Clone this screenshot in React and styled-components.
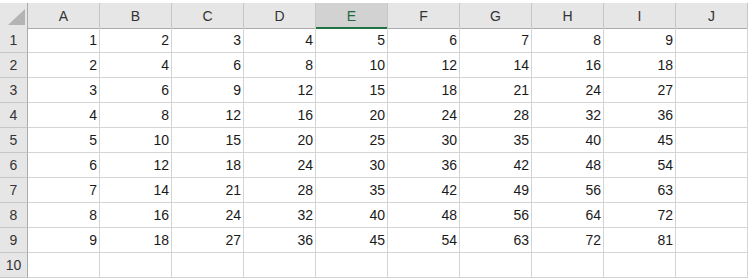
import React from 'react';
import styled, { createGlobalStyle } from 'styled-components';

const GlobalStyle = createGlobalStyle`
    html, body {
        margin : 0;
        padding : 0;
        background : #ffffff;
    }
    body {
        font-family : "Liberation Sans", Arial, sans-serif;
    }
`

const COLS = ['A', 'B', 'C', 'D', 'E', 'F', 'G', 'H', 'I', 'J'];
const ROWS = 10;
const SELECTED = 'E';

const Sheet = styled.div`
    display : grid;
    grid-template-columns : 28px repeat(10, 72px);
    grid-auto-rows : 25px;
    padding-top : 3px;
    width : 748px;
    font-size : 14px;
`

const Corner = styled.div`
    display : flex;
    justify-content : flex-end;
    align-items : flex-end;
    height : 26px;
    box-sizing : border-box;
    padding : 0 2px 3px 0;
    background : #e6e6e6;
    border-right : 1px solid #ababab;
    border-bottom : 1px solid #ababab;
`

const ColHead = styled.div`
    display : flex;
    align-items : center;
    justify-content : center;
    height : 26px;
    box-sizing : border-box;
    background : ${p => p.$selected ? '#d2d2d2' : '#e6e6e6'};
    color : ${p => p.$selected ? '#1e6b3f' : '#333333'};
    border-right : 1px solid #c6c6c6;
    border-bottom : ${p => p.$selected ? '2px solid #217346' : '1px solid #ababab'};
    padding-top : ${p => p.$selected ? '1px' : '0'};
`

const RowHead = styled.div`
    display : flex;
    align-items : center;
    justify-content : center;
    box-sizing : border-box;
    background : #e6e6e6;
    color : #333333;
    border-right : 1px solid #ababab;
    border-bottom : 1px solid #c6c6c6;
`

const Cell = styled.div`
    display : flex;
    align-items : center;
    justify-content : flex-end;
    box-sizing : border-box;
    padding-right : 2px;
    color : #1a1a1a;
    border-right : 1px solid #d4d4d4;
    border-bottom : 1px solid #d4d4d4;
`

const App = () => {
    return (
        <>
            <GlobalStyle />
            <Sheet>
                <Corner>
                    <svg width="17" height="16" viewBox="0 0 17 16">
                        <polygon points="0,16 17,16 17,0" fill="#b4b4b4" />
                    </svg>
                </Corner>
                {COLS.map(c => (
                    <ColHead key={c} $selected={c === SELECTED}>{c}</ColHead>
                ))}
                {Array.from({ length: ROWS }, (_, r) => (
                    <React.Fragment key={r}>
                        <RowHead>{r + 1}</RowHead>
                        {COLS.map((c, i) => (
                            <Cell key={c}>
                                {r < 9 && i < 9 ? (r + 1) * (i + 1) : ''}
                            </Cell>
                        ))}
                    </React.Fragment>
                ))}
            </Sheet>
        </>
    )
}

export default App;
